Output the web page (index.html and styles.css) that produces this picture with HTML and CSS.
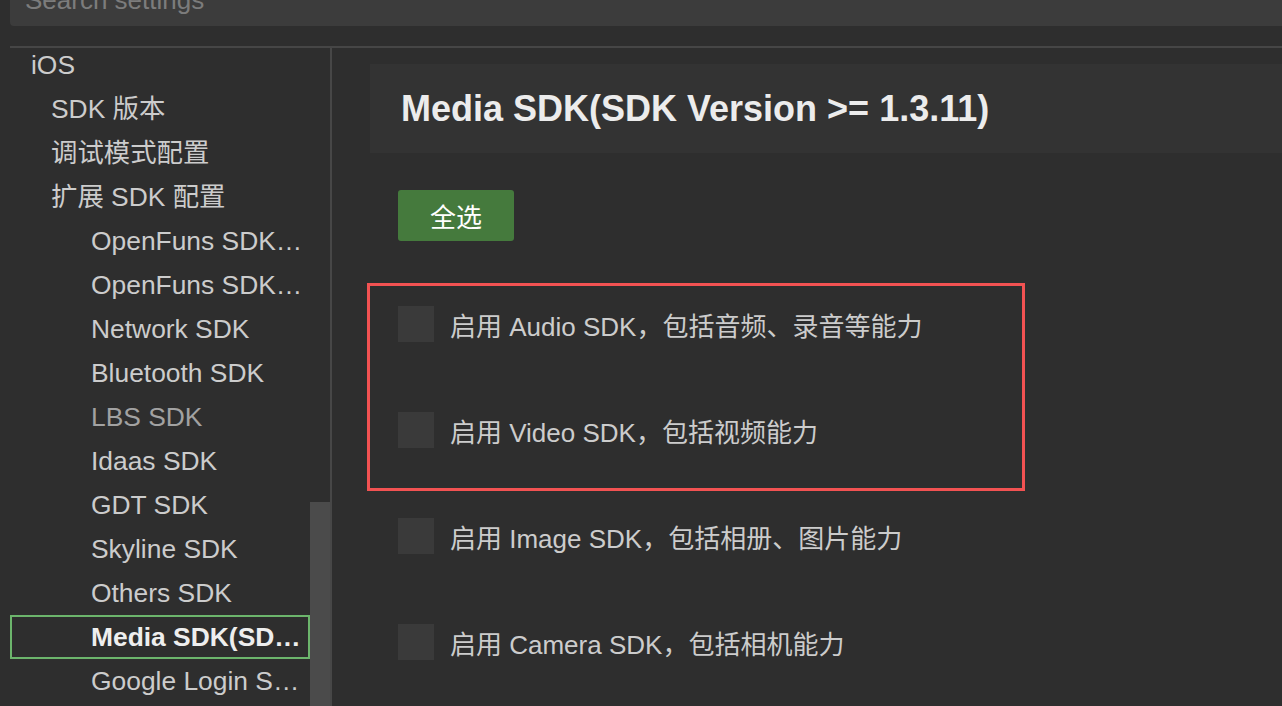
FILE: index.html
```html
<!DOCTYPE html>
<html lang="zh">
<head>
<meta charset="utf-8">
<title>Settings</title>
<link rel="stylesheet" href="styles.css">
</head>
<body>
<div class="app">
  <div class="search-row">
    <div class="search">Search settings</div>
  </div>
  <div class="main">
    <nav class="sidebar">
      <div class="tree">
        <ul class="tree-list">
          <li class="item l0">iOS</li>
          <li class="item l1">SDK 版本</li>
          <li class="item l1">调试模式配置</li>
          <li class="item l1">扩展 SDK 配置</li>
          <li class="item l2">OpenFuns SDK(SDK Version &gt;= 1.3.0)</li>
          <li class="item l2">OpenFuns SDK 配置项</li>
          <li class="item l2">Network SDK</li>
          <li class="item l2">Bluetooth SDK</li>
          <li class="item l2 dim">LBS SDK</li>
          <li class="item l2">Idaas SDK</li>
          <li class="item l2">GDT SDK</li>
          <li class="item l2">Skyline SDK</li>
          <li class="item l2">Others SDK</li>
          <li class="item l2 selected">Media SDK(SDK Version &gt;= 1.3.11)</li>
          <li class="item l2">Google Login SDK</li>
        </ul>
      </div>
      <div class="scrollbar"><div class="thumb"></div></div>
    </nav>
    <section class="content">
      <header class="section-head">Media SDK(SDK Version &gt;= 1.3.11)</header>
      <button class="select-all">全选</button>
      <div class="options">
        <label class="option"><span class="check"></span><span class="label">启用 Audio SDK，包括音频、录音等能力</span></label>
        <label class="option"><span class="check"></span><span class="label">启用 Video SDK，包括视频能力</span></label>
        <label class="option"><span class="check"></span><span class="label">启用 Image SDK，包括相册、图片能力</span></label>
        <label class="option"><span class="check"></span><span class="label">启用 Camera SDK，包括相机能力</span></label>
        <div class="annotation"></div>
      </div>
    </section>
  </div>
</div>
</body>
</html>
```

FILE: styles.css
```css
* { box-sizing: border-box; }
html, body {
  margin: 0;
  padding: 0;
  height: 100%;
  background: #2e2e2e;
  overflow: hidden;
}
body {
  font-family: "Liberation Sans", Arial, "Noto Sans CJK SC", sans-serif;
  color: #cccccc;
}
.app {
  height: 706px;
  display: flex;
  flex-direction: column;
  padding-left: 10px;
}
.search-row {
  height: 48px;
  border-bottom: 2px solid #464646;
  flex: none;
}
.search {
  margin-top: -26px;
  height: 52px;
  background: #3c3c3c;
  border-radius: 0 0 0 4px;
  padding-left: 15px;
  font-size: 26px;
  line-height: 52px;
  color: #7c7c7c;
}
.main {
  flex: 1;
  display: flex;
  min-height: 0;
}
.sidebar {
  width: 322px;
  flex: none;
  display: flex;
  border-right: 2px solid #474747;
}
.tree {
  width: 300px;
  overflow: hidden;
}
.tree-list {
  list-style: none;
  margin: -5px 0 0 0;
  padding: 0;
}
.item {
  height: 44px;
  line-height: 44px;
  font-size: 26.4px;
  white-space: nowrap;
  overflow: hidden;
  text-overflow: ellipsis;
  padding-right: 2px;
  color: #cccccc;
}
.l0 { padding-left: 21px; }
.l1 { padding-left: 41px; }
.l2 { padding-left: 81px; }
.dim { color: #a2a2a2; }
.selected {
  border: 2px solid #6cb56c;
  line-height: 40px;
  padding-left: 79px;
  font-weight: bold;
  color: #eeeeee;
}
.scrollbar {
  width: 20px;
  display: flex;
  flex-direction: column;
  justify-content: flex-end;
}
.thumb {
  height: 204px;
  background: #4b4b4b;
}
.content {
  flex: 1;
  padding: 16px 0 0 38px;
  min-width: 0;
}
.section-head {
  height: 89px;
  background: #333333;
  padding-left: 31px;
  display: flex;
  align-items: center;
  font-size: 36px;
  font-weight: bold;
  color: #ececec;
  white-space: nowrap;
}
.select-all {
  display: block;
  margin: 37px 0 0 28px;
  width: 116px;
  height: 51px;
  border: none;
  border-radius: 3px;
  background: #457a3d;
  color: #ffffff;
  font-family: "Liberation Sans", "Noto Sans CJK SC", sans-serif;
  font-size: 26px;
  padding: 0;
}
.options {
  position: relative;
  margin-top: 65px;
  padding-left: 28px;
  display: flex;
  flex-direction: column;
  gap: 70px;
}
.option {
  display: flex;
  align-items: center;
  gap: 16px;
  height: 36px;
}
.check {
  width: 36px;
  height: 36px;
  background: #3a3a3a;
  flex: none;
}
.label {
  font-size: 26px;
  line-height: 36px;
  color: #cccccc;
  white-space: nowrap;
  padding-top: 5px;
}
.annotation {
  position: absolute;
  left: -3px;
  top: -23px;
  width: 658px;
  height: 208px;
  border: 3px solid #f25252;
  pointer-events: none;
}
```
